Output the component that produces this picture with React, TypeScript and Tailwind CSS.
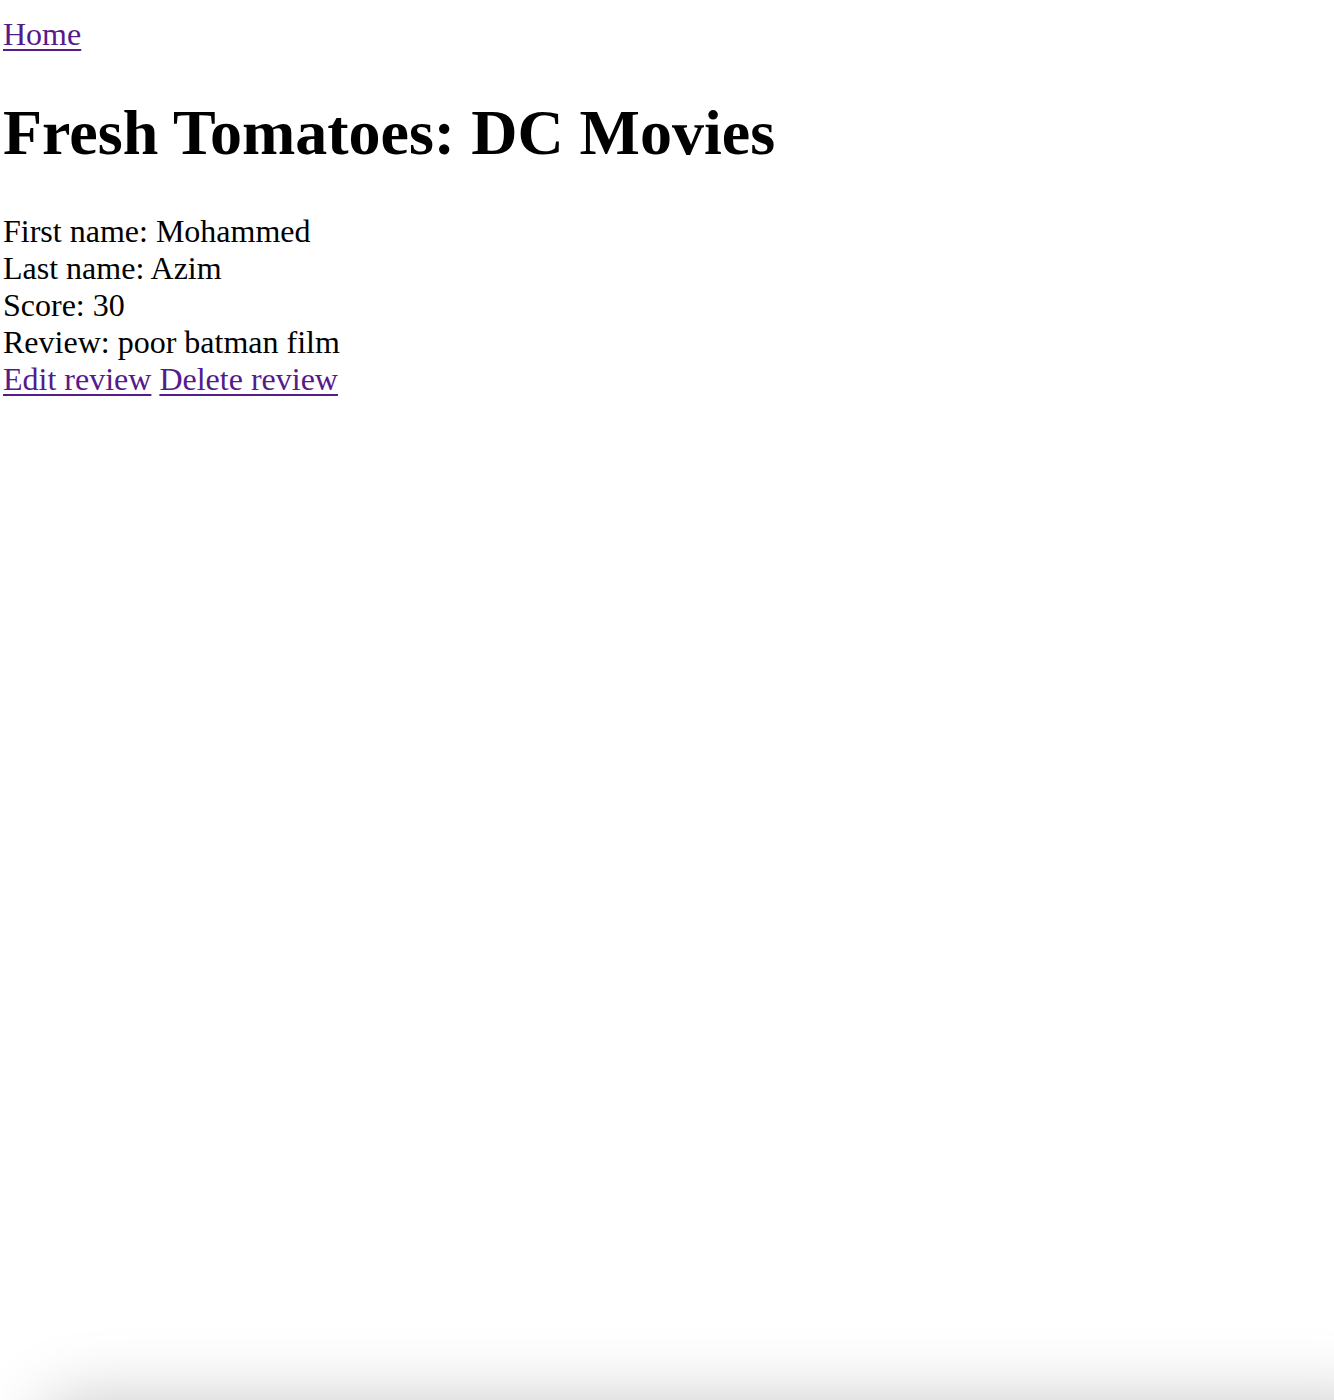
export default function App() {
  return (
    <div className="relative h-[1400px] overflow-hidden bg-white font-['Liberation_Serif',serif] text-[32px] leading-[normal] text-black">
      <div className="pt-[16px] pl-[3px]">
        <div>
          <a href="#" className="text-[#551a8b] underline decoration-2 underline-offset-[4px]">Home</a>
        </div>
        <h1 className="my-[43px] text-[64px] font-bold leading-[normal]">Fresh Tomatoes: DC Movies</h1>
        <div>First name: Mohammed</div>
        <div>Last name: Azim</div>
        <div>Score: 30</div>
        <div>Review: poor batman film</div>
        <div>
          <a href="#" className="text-[#551a8b] underline decoration-2 underline-offset-[4px]">Edit review</a>{" "}
          <a href="#" className="text-[#551a8b] underline decoration-2 underline-offset-[4px]">Delete review</a>
        </div>
      </div>
      <div className="absolute top-[1400px] left-[40px] right-[-60px] h-[200px] rounded-[40px] bg-white shadow-[0_0_70px_rgba(0,0,0,0.22)]" />
    </div>
  );
}
